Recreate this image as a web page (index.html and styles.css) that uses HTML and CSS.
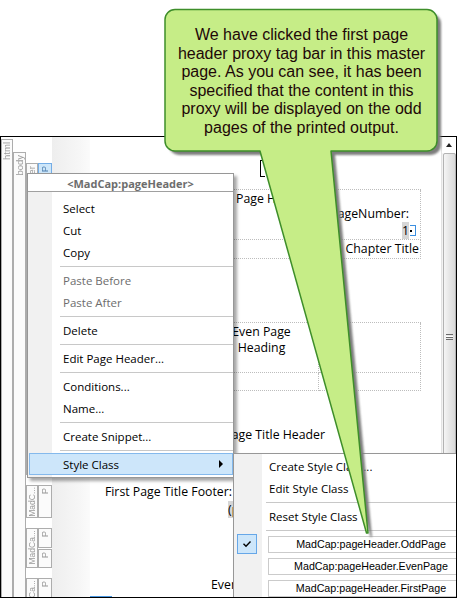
FILE: index.html
```html
<!DOCTYPE html>
<html>
<head>
<meta charset="utf-8">
<link rel="stylesheet" href="styles.css">
</head>
<body>
<div class="stage">
  <div class="window">
    <div class="tags">
      <div class="tagcol c1">
        <div class="tag t-html"><span>html</span></div>
      </div>
      <div class="tagcol c2">
        <div class="tag t-body"><span>body</span></div>
      </div>
      <div class="tagcol c3">
        <div class="tag t3a"><span>MadCap:pageHeader</span></div>
        <div class="tag t3b small"><span>MadC...</span></div>
        <div class="tag t3c small"><span>MadCa...</span></div>
        <div class="tag t3d small"><span>MadCa...</span></div>
      </div>
      <div class="tagcol c4">
        <div class="tag p4a sel"><span>P</span></div>
        <div class="tag p4b"><span>P</span></div>
        <div class="tag p4c"><span>P</span></div>
        <div class="tag p4d"><span>P</span></div>
        <div class="tag p4e"><span>P</span></div>
      </div>
    </div>
    <div class="strip"></div>
    <div class="page">
      <div class="bracket"></div>
      <div class="tbl hdr">
        <div class="cell"></div>
        <div class="cell c-mid">Page Header</div>
        <div class="cell c-num"><div class="pn">PageNumber:</div><div class="pv"><span class="fld">1</span><span class="mark"></span></div></div>
        <div class="cell"></div>
        <div class="cell"></div>
        <div class="cell c-chap">Chapter Title</div>
      </div>
      <div class="tbl even">
        <div class="cell"></div>
        <div class="cell c-even">Even Page<br>Heading</div>
        <div class="cell"></div>
        <div class="cell r2 span2"></div>
        <div class="cell r2"></div>
      </div>
      <div class="line title-hdr">First Page Title Header</div>
      <div class="line foot">First Page Title Footer:</div>
      <div class="line foot2"><span class="fld">(page)</span></div>
      <div class="line evenfoot">Even Page Footer</div>
      <div class="bluebox"></div>
    </div>
    <div class="vscroll">
      <div class="sb-up"><span class="tri"></span></div>
      <div class="sb-thumb"><span class="grip"></span></div>
    </div>

    <div class="ctx">
      <div class="ctx-head">&lt;MadCap:pageHeader&gt;</div>
      <div class="ctx-body">
        <div class="mi">Select</div>
        <div class="mi">Cut</div>
        <div class="mi">Copy</div>
        <div class="sep"></div>
        <div class="mi dis">Paste Before</div>
        <div class="mi dis">Paste After</div>
        <div class="sep"></div>
        <div class="mi">Delete</div>
        <div class="sep"></div>
        <div class="mi">Edit Page Header...</div>
        <div class="sep"></div>
        <div class="mi">Conditions...</div>
        <div class="mi">Name...</div>
        <div class="sep"></div>
        <div class="mi">Create Snippet...</div>
        <div class="sep"></div>
        <div class="mi hot">Style Class<span class="arrow"></span></div>
      </div>
    </div>

    <div class="sub">
      <div class="mi">Create Style Class...</div>
      <div class="mi">Edit Style Class</div>
      <div class="sep"></div>
      <div class="mi">Reset Style Class</div>
      <div class="sep"></div>
      <div class="crow">
        <div class="check"><svg width="10" height="8" viewBox="0 0 10 8"><polyline points="1.5,3.8 4,6.3 8.5,1.5" fill="none" stroke="#000" stroke-width="1.4"/></svg></div>
        <div class="tbox">MadCap:pageHeader.OddPage</div>
      </div>
      <div class="crow">
        <div class="tbox nochk">MadCap:pageHeader.EvenPage</div>
      </div>
      <div class="crow">
        <div class="tbox nochk">MadCap:pageHeader.FirstPage</div>
      </div>
    </div>
  </div>

  <svg class="callout" width="458" height="602" viewBox="0 0 458 602">
    <defs>
      <filter id="sh" x="-10%" y="-10%" width="120%" height="120%">
        <feGaussianBlur stdDeviation="1"/>
      </filter>
    </defs>
    <path transform="translate(4 4)" fill="#7d7d7d" filter="url(#sh)" d="M175,9.5 H427 A10,10 0 0 1 437,19.5 V141 A10,10 0 0 1 427,151 H331 L368,533 L366.5,533 L260,151 H175 A10,10 0 0 1 165,141 V19.5 A10,10 0 0 1 175,9.5 Z"/>
    <path fill="#c6ed87" stroke="#3e8e2a" stroke-width="1.5" stroke-linejoin="round" d="M175,9.5 H427 A10,10 0 0 1 437,19.5 V141 A10,10 0 0 1 427,151 H331 L368,533 L366.5,533 L260,151 H175 A10,10 0 0 1 165,141 V19.5 A10,10 0 0 1 175,9.5 Z"/>
  </svg>
  <div class="callout-text">We have clicked the first page<br>header proxy tag bar in this master<br>page. As you can see, it has been<br>specified that the content in this<br>proxy will be displayed on the odd<br>pages of the printed output.</div>
</div>
</body>
</html>
```

FILE: styles.css
```css
* { box-sizing: border-box; }
html, body { margin: 0; padding: 0; }
body {
  width: 458px;
  height: 602px;
  overflow: hidden;
  background: #fff;
  font-family: "Open Sans", "Noto Sans", sans-serif;
}
.stage {
  position: relative;
  width: 458px;
  height: 602px;
  padding-top: 136px;
}
.window {
  position: relative;
  width: 457px;
  height: 462px;
  border: 1px solid #000;
  overflow: hidden;
  display: flex;
  background: #fff;
}

/* tag bars */
.tags { display: flex; width: 51px; flex: none; }
.tagcol { display: flex; flex-direction: column; flex: none; }
.c1 { width: 12px; }
.c2 { width: 13px; }
.c3 { width: 12px; }
.c4 { width: 14px; }
.tag {
  flex: none;
  border: 1px solid #adadad;
  background: #fbfbfb;
  color: #9a9a9a;
  font: 9.5px/10px "Liberation Sans", Arial, sans-serif;
  display: flex;
  flex-direction: column;
  align-items: center;
  overflow: hidden;
}
.tag span {
  writing-mode: vertical-rl;
  transform: rotate(180deg);
  white-space: nowrap;
  margin-top: 2px;
}
.tag.small { font-size: 8.5px; }
.tag.small span { margin-top: 1px; }
.t-html { margin-top: 2px; height: 520px; }
.t-body { margin-top: 15px; height: 520px; }
.t3a { margin-top: 26px; height: 312px; }
.t3b { margin-top: 10px; height: 33px; }
.t3c { margin-top: 10px; height: 40px; }
.t3d { margin-top: 10px; height: 40px; }
.p4a { margin-top: 26px; height: 40px; }
.p4a.sel { background: #cde6f9; border-color: #74ade6; color: #4f7faf; }
.p4b { margin-top: 282px; height: 33px; }
.p4c { margin-top: 10px; height: 20px; }
.p4d { margin-top: 1px; height: 19px; }
.p4e { margin-top: 10px; height: 20px; }

/* margin strip */
.strip {
  flex: none;
  width: 38px;
  background: linear-gradient(to right, #eeeeee, #f6f6f6 70%, #fbfbfb);
}

/* page */
.page {
  flex: none;
  width: 351px;
  display: flex;
  flex-direction: column;
  align-items: flex-start;
  font-size: 12.3px;
  line-height: 17px;
  color: #000;
}
.page > * { flex: none; }
.bracket {
  margin: 23px 0 0 170px;
  width: 5px;
  height: 17px;
  border: 1px solid #000;
  border-right: none;
}
.tbl {
  display: grid;
  margin-left: 10px;
  border-top: 1px dotted #bdbdbd;
  border-left: 1px dotted #bdbdbd;
}
.cell {
  border-right: 1px dotted #bdbdbd;
  border-bottom: 1px dotted #bdbdbd;
}
.hdr {
  margin-top: 12px;
  grid-template-columns: 133px 85px 102px;
  grid-template-rows: 50px 19px;
}
.c-mid { padding-left: 2px; white-space: nowrap; overflow: hidden; }
.c-num {
  display: flex;
  flex-direction: column;
  justify-content: flex-end;
  align-items: flex-end;
}
.pn { padding-right: 11px; }
.pv { padding-right: 4px; display: flex; align-items: center; }
.fld { background: #d6d6d6; }
.mark {
  width: 6px;
  height: 11px;
  margin-left: 1px;
  border: 1px solid #3b8fe0;
  border-left: none;
  position: relative;
}
.mark::after {
  content: "";
  position: absolute;
  left: 0;
  top: 4px;
  width: 2px;
  height: 2px;
  background: #000;
}
.c-chap { text-align: right; padding-right: 1px; line-height: 17px; }
.even {
  margin-top: 63px;
  grid-template-columns: 116px 102px 102px;
  grid-template-rows: 50px 18px;
}
.c-even { text-align: center; line-height: 16px; padding: 1px 12px 0 0; white-space: nowrap; }
.span2 { grid-column: span 2; }
.line { white-space: nowrap; }
.title-hdr { margin: 35px 0 0 10px; width: 225px; text-align: right; }
.foot { margin: 40px 0 0 10px; width: 132px; text-align: right; line-height: 18px; }
.foot2 { margin-left: 138px; line-height: 18px; }
.evenfoot { margin: 57px 0 0 121px; }
.bluebox {
  margin-top: 3px;
  width: 22px;
  height: 10px;
  border: 1px solid #4a98e2;
}

/* scrollbar */
.vscroll {
  flex: none;
  width: 15px;
  border-left: 1px solid #e3e3e3;
  background: #f3f3f3;
  display: flex;
  flex-direction: column;
  align-items: center;
}
.vscroll > * { flex: none; }
.sb-up {
  width: 14px;
  height: 16px;
  display: flex;
  align-items: center;
  justify-content: center;
  background: #fff;
}
.tri {
  width: 0;
  height: 0;
  border-left: 3.5px solid transparent;
  border-right: 3.5px solid transparent;
  border-bottom: 4px solid #222;
}
.sb-thumb {
  width: 13px;
  height: 320px;
  border: 1px solid #b3b3b3;
  border-radius: 2px;
  background: linear-gradient(to right, #f5f5f5, #e6e6e6 50%, #d9d9d9);
  display: flex;
  justify-content: center;
  padding-top: 180px;
}
.grip {
  width: 7px;
  height: 6px;
  border-top: 1px solid #6a6a6a;
  border-bottom: 1px solid #6a6a6a;
  background: linear-gradient(#fff 0, #fff 1px, #6a6a6a 1px, #6a6a6a 2px, transparent 2px);
  background-position: 0 1px;
  background-repeat: no-repeat;
}

/* context menu */
.ctx {
  position: absolute;
  left: 26px;
  top: 36px;
  width: 207px;
  border: 1px solid #979797;
  background: #fff;
  box-shadow: 3px 3px 3px rgba(0, 0, 0, 0.35);
  font-size: 11.5px;
}
.ctx-head {
  height: 18px;
  padding-top: 2px;
  line-height: 15px;
  text-align: center;
  font-weight: bold;
  font-size: 11px;
  color: #6d6d6d;
  border-bottom: 1px solid #a0a0a0;
}
.ctx-body {
  padding: 5px 0 2px 1px;
  background: linear-gradient(to right, #f1f1f1 0, #f1f1f1 24px, #fff 24px);
}
.mi {
  height: 22px;
  display: flex;
  align-items: center;
  padding-left: 33px;
  border: 1px solid transparent;
  color: #000;
  white-space: nowrap;
}
.mi.dis { color: #6d6d6d; }
.mi.hot { background: #cde6fa; border-color: #84b9ec; }
.arrow {
  margin-left: auto;
  margin-right: 9px;
  width: 0;
  height: 0;
  border-left: 4px solid #000;
  border-top: 4px solid transparent;
  border-bottom: 4px solid transparent;
}
.sep { height: 6px; margin-left: 31px; padding-top: 3px; }
.sep::before {
  content: "";
  display: block;
  height: 1px;
  background: #c8c8c8;
}

/* sub menu */
.sub {
  position: absolute;
  left: 232px;
  top: 316px;
  width: 250px;
  height: 160px;
  border: 1px solid #979797;
  padding-top: 1px;
  background: linear-gradient(to right, #f1f1f1 0, #f1f1f1 28px, #fff 28px);
  box-shadow: 3px 3px 3px rgba(0, 0, 0, 0.35);
  font-size: 11.5px;
}
.sub .mi { padding-left: 34px; }
.sub .sep { margin-left: 32px; }
.crow { height: 22px; display: flex; align-items: flex-start; }
.check {
  width: 20px;
  height: 20px;
  margin: 1px 0 0 3px;
  background: #cde6fa;
  border: 1px solid #66a7e8;
  display: flex;
  align-items: center;
  justify-content: center;
}
.tbox {
  margin: 3px 0 0 11px;
  width: 206px;
  height: 17px;
  border: 1px solid #cbcbcb;
  background: #fff;
  font: 10.7px/15px "Liberation Sans", Arial, sans-serif;
  text-align: center;
  color: #000;
}
.tbox.nochk { margin-left: 34px; }

/* callout */
.callout { position: absolute; left: 0; top: 0; }
.callout-text {
  position: absolute;
  left: 165px;
  top: 26px;
  width: 273px;
  text-align: center;
  font: 16px/18.6px "Liberation Sans", Arial, sans-serif;
  color: #1e0808;
}
```
